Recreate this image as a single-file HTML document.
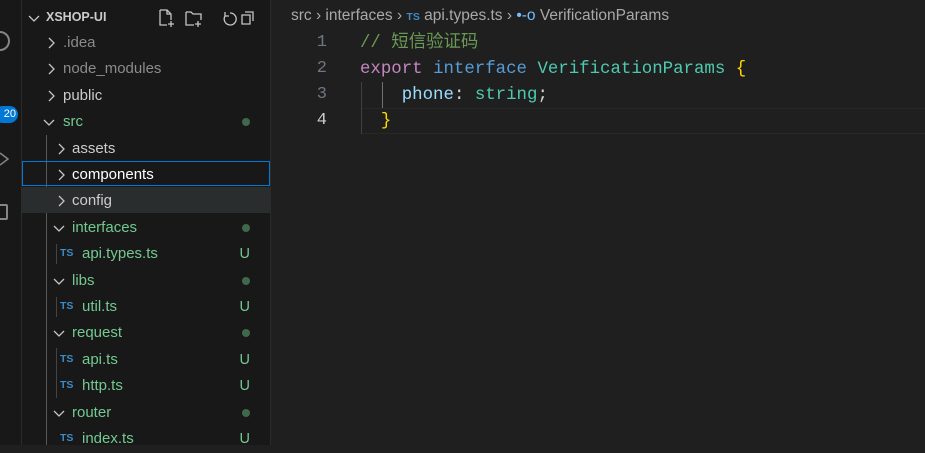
<!DOCTYPE html>
<html><head><meta charset="utf-8"><style>
body{margin:0;width:925px;height:445px;overflow:hidden;background:#1f1f1f;font-family:"Liberation Sans","Noto Sans CJK SC",sans-serif;position:relative}
#act{position:absolute;left:0;top:0;width:21px;height:445px;background:#181818;border-right:1px solid #2b2b2b}
#side{position:absolute;left:22px;top:0;width:248px;height:445px;background:#181818;border-right:1px solid #2b2b2b}
.row{position:absolute;left:0;width:248px;height:26px;line-height:28px;font-size:15px;color:#cccccc;white-space:nowrap}
.r{position:absolute;top:8px}
.d{position:absolute;top:9px}
.g{color:#73c991}
.dot{position:absolute;right:20px;top:10px;width:8px;height:8px;border-radius:50%;background:#40684c}
.u{position:absolute;right:20px;top:0;color:#73c991;font-size:14.5px}
.ts{position:absolute;font-size:10.5px;font-weight:bold;color:#3c8ac6;top:-1px}
#ed{position:absolute;left:271px;top:0;right:0;height:445px}
.code{position:absolute;font-family:"Liberation Mono","Noto Sans CJK SC",monospace;font-size:17.4px;white-space:pre;height:26px;line-height:26px}
.ln{position:absolute;width:56px;text-align:right;left:0;color:#6e7681;font-family:"Liberation Mono",monospace;font-size:17px;line-height:26px}
</style></head><body>
<svg width="0" height="0" style="position:absolute"><defs>
<symbol id="cr" viewBox="0 0 10 12"><path d="M3 1l5 5-5 5" fill="none" stroke="#c5c5c5" stroke-width="1.3"/></symbol>
<symbol id="cd" viewBox="0 0 12 10"><path d="M1 3l5 5 5-5" fill="none" stroke="#c5c5c5" stroke-width="1.3"/></symbol>
</defs></svg>
<div id="act">
<div style="position:absolute;left:-10px;top:31px;width:16px;height:16px;border:2px solid #858585;border-radius:50%"></div>
<div style="position:absolute;left:-6px;top:106px;width:24px;height:17px;border-radius:9px;background:#0078d4;color:#fff;font-size:11px;line-height:17px;text-align:right;padding-right:2px;box-sizing:border-box">20</div>
<svg style="position:absolute;left:0;top:152px" width="10" height="14"><path d="M0 1l8 6-8 6" fill="none" stroke="#858585" stroke-width="1.5"/></svg>
<div style="position:absolute;left:-8px;top:204px;width:12px;height:12px;border:2px solid #858585;border-radius:2px"></div>
</div>
<div id="side">
<div class="row" style="top:3px;font-weight:bold;font-size:12.5px;color:#cccccc"><svg class="d" style="left:6px;top:10px" width="12" height="10"><use href="#cd"/></svg><span style="position:absolute;left:24px">XSHOP-UI</span>
<svg style="position:absolute;left:136px;top:6px" width="110" height="18" fill="none" stroke="#c5c5c5" stroke-width="1.3"><path d="M2 1h7l4 4v6M2 1v15h7M9 1v4h4M13 12v6M10 15h6"/><path d="M28 3h5l2 2h8v6M28 3v13h8M40 12v6M37 15h6"/><path d="M72 4a6 6 0 1 1-5 3M67 3v4h4"/><path d="M84 6h8v9h-8zM87 3h8v9"/></svg></div>
<div class="row" style="top:29px;color:#8b8b8b"><svg class="r" style="left:24px" width="10" height="12"><use href="#cr"/></svg><span style="position:absolute;left:41px">.idea</span></div>
<div class="row" style="top:55px;color:#8b8b8b"><svg class="r" style="left:24px" width="10" height="12"><use href="#cr"/></svg><span style="position:absolute;left:41px">node_modules</span></div>
<div class="row" style="top:82px"><svg class="r" style="left:24px" width="10" height="12"><use href="#cr"/></svg><span style="position:absolute;left:41px">public</span></div>
<div class="row g" style="top:108px"><svg class="d" style="left:21px" width="12" height="10"><use href="#cd"/></svg><span style="position:absolute;left:41px">src</span><span class="dot"></span></div>
<div style="position:absolute;left:24px;top:135px;width:1px;height:310px;background:#585858"></div>
<div class="row" style="top:135px"><svg class="r" style="left:34px" width="10" height="12"><use href="#cr"/></svg><span style="position:absolute;left:50px">assets</span></div>
<div class="row" style="top:161px;box-sizing:border-box;border:1px solid #0078d4;height:25px;line-height:26px"><svg class="r" style="left:33px;top:7px" width="10" height="12"><use href="#cr"/></svg><span style="position:absolute;left:49px;color:#fff">components</span></div>
<div class="row" style="top:187px;background:#2a2d2e"><svg class="r" style="left:34px" width="10" height="12"><use href="#cr"/></svg><span style="position:absolute;left:50px">config</span></div>
<div class="row g" style="top:214px"><svg class="d" style="left:31px" width="12" height="10"><use href="#cd"/></svg><span style="position:absolute;left:50px">interfaces</span><span class="dot"></span></div>
<div class="row g" style="top:240px"><span style="position:absolute;left:34px;top:4px;width:1px;height:20px;background:#444"></span><span class="ts" style="left:38px">TS</span><span style="position:absolute;left:60px">api.types.ts</span><span class="u">U</span></div>
<div class="row g" style="top:267px"><svg class="d" style="left:31px" width="12" height="10"><use href="#cd"/></svg><span style="position:absolute;left:50px">libs</span><span class="dot"></span></div>
<div class="row g" style="top:293px"><span style="position:absolute;left:34px;top:4px;width:1px;height:20px;background:#444"></span><span class="ts" style="left:38px">TS</span><span style="position:absolute;left:60px">util.ts</span><span class="u">U</span></div>
<div class="row g" style="top:319px"><svg class="d" style="left:31px" width="12" height="10"><use href="#cd"/></svg><span style="position:absolute;left:50px">request</span><span class="dot"></span></div>
<div class="row g" style="top:346px"><span style="position:absolute;left:34px;top:2px;width:1px;height:50px;background:#444"></span><span class="ts" style="left:38px">TS</span><span style="position:absolute;left:60px">api.ts</span><span class="u">U</span></div>
<div class="row g" style="top:372px"><span class="ts" style="left:38px">TS</span><span style="position:absolute;left:60px">http.ts</span><span class="u">U</span></div>
<div class="row g" style="top:399px"><svg class="d" style="left:31px" width="12" height="10"><use href="#cd"/></svg><span style="position:absolute;left:50px">router</span><span class="dot"></span></div>
<div class="row g" style="top:425px"><span class="ts" style="left:38px">TS</span><span style="position:absolute;left:60px">index.ts</span><span class="u">U</span></div>
</div>
<div id="ed">
<div style="position:absolute;left:20px;top:7px;font-size:15.5px;color:#a9a9a9;white-space:nowrap">src &#x203A; interfaces &#x203A; <span style="color:#3c8ac6;font-size:10.5px;font-weight:bold">TS</span> api.types.ts &#x203A; <span style="color:#75beff">&#x2022;-o</span> VerificationParams</div>
<div class="ln" style="top:30px">1</div>
<div class="ln" style="top:56px">2</div>
<div class="ln" style="top:82px">3</div>
<div class="ln" style="top:108px;color:#cccccc">4</div>
<div style="position:absolute;left:90px;top:108px;right:0;border-top:1px solid #282828;border-bottom:1px solid #282828;box-sizing:border-box;height:26px"></div>
<div style="position:absolute;left:90px;top:82px;width:1px;height:52px;background:#404040"></div>
<div style="position:absolute;left:111px;top:82px;width:1px;height:26px;background:#707070"></div>
<div class="code" style="left:89px;top:31px;color:#6a9955">// 短信验证码</div>
<div class="code" style="left:89px;top:57px"><span style="color:#c586c0">export</span> <span style="color:#569cd6">interface</span> <span style="color:#4ec9b0">VerificationParams</span> <span style="color:#ffd700">{</span></div>
<div class="code" style="left:89px;top:83px">    <span style="color:#9cdcfe">phone</span><span style="color:#d4d4d4">:</span> <span style="color:#4ec9b0">string</span><span style="color:#d4d4d4">;</span></div>
<div class="code" style="left:89px;top:109px;color:#ffd700">  }</div>
</div>
</body></html>
